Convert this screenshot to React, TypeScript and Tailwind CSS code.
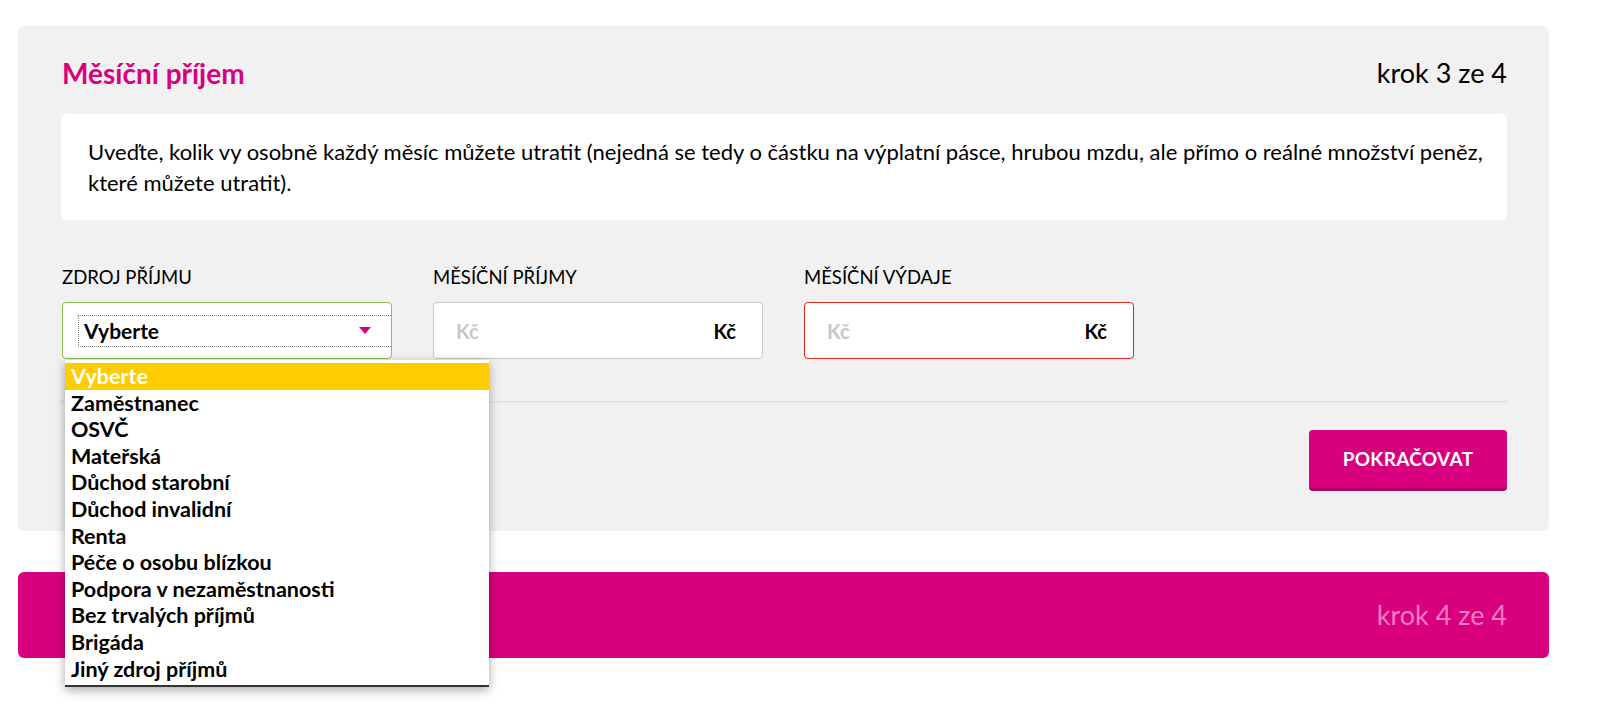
const options = [
  "Vyberte",
  "Zaměstnanec",
  "OSVČ",
  "Mateřská",
  "Důchod starobní",
  "Důchod invalidní",
  "Renta",
  "Péče o osobu blízkou",
  "Podpora v nezaměstnanosti",
  "Bez trvalých příjmů",
  "Brigáda",
  "Jiný zdroj příjmů",
];

function MoneyInput({ error }: { error?: boolean }) {
  return (
    <div
      className={
        "flex h-[57px] w-[330px] items-center justify-between rounded-[4px] border bg-white pl-[22px] pr-[26px] " +
        (error ? "border-[#e2231a]" : "border-[#c9c9c9]")
      }
    >
      <span className="text-[20px] font-bold text-[#c8c8c8]">Kč</span>
      <span className="text-[20px] font-bold text-black">Kč</span>
    </div>
  );
}

export default function App() {
  return (
    <div className="min-h-screen bg-white pt-[26px] pl-[18px] pr-[51px] font-['Lato',sans-serif] text-[#111]">
      <div className="rounded-[6px] bg-[#f1f1f1] pt-[30px] pb-[40px] pl-[43px] pr-[42px]">
        <div className="flex h-[34px] items-center justify-between pl-[1px]">
          <h1 className="text-[28px] font-bold text-[#d8007f]">Měsíční příjem</h1>
          <span className="text-[27px] text-black">krok 3 ze 4</span>
        </div>

        <div className="mt-[24px] rounded-[6px] bg-white pl-[27px] pr-[20px] py-[22px] text-[22px] leading-[31px] text-black">
          Uveďte, kolik vy osobně každý měsíc můžete utratit (nejedná se tedy o částku na výplatní pásce, hrubou mzdu, ale přímo o reálné množství peněz, které můžete utratit).
        </div>

        <div className="mt-[47px] flex gap-[41px] pl-[1px]">
          <div className="relative">
            <label className="block text-[18.5px] leading-[20px] text-black">ZDROJ PŘÍJMU</label>
            <div className="mt-[15px] flex h-[57px] w-[330px] items-center overflow-hidden rounded-[4px] border border-[#8cc152] bg-white pl-[15px]">
              <div className="flex h-[32px] flex-1 items-center border border-dotted border-r-0 border-[#888] pl-[5px] pr-[20px]">
                <span className="flex-1 text-[21px] font-bold text-black">Vyberte</span>
                <svg width="12" height="7" viewBox="0 0 12 7">
                  <path d="M0 0 H12 L6 7 Z" fill="#d8007f" />
                </svg>
              </div>
            </div>
            <ul className="absolute left-[3px] top-[93px] z-10 w-[424px] border-b-2 border-[#333] bg-white py-[3px] shadow-[0_3px_10px_rgba(0,0,0,0.35)]">
              {options.map((o, i) => (
                <li
                  key={o}
                  className={
                    "h-[26.6px] pl-[6px] text-[21.5px] font-bold leading-[26.6px] " +
                    (i === 0 ? "bg-[#ffcc00] text-white" : "text-black")
                  }
                >
                  {o}
                </li>
              ))}
            </ul>
          </div>
          <div>
            <label className="block text-[18.5px] leading-[20px] text-black">MĚSÍČNÍ PŘÍJMY</label>
            <div className="mt-[15px]">
              <MoneyInput />
            </div>
          </div>
          <div>
            <label className="block text-[18.5px] leading-[20px] text-black">MĚSÍČNÍ VÝDAJE</label>
            <div className="mt-[15px]">
              <MoneyInput error />
            </div>
          </div>
        </div>

        <div className="mt-[42px] h-[2px] bg-[#e4e4e4]" />

        <div className="mt-[27px] flex justify-end">
          <button className="h-[61px] w-[198px] rounded-[4px] border-b-[3px] border-[#a3005f] bg-[#d8007f] text-[19px] font-bold tracking-[0.3px] text-white">
            POKRAČOVAT
          </button>
        </div>
      </div>

      <div className="mt-[41px] flex h-[86px] items-center justify-end rounded-[6px] bg-[#d8007f] pr-[42px]">
        <span className="text-[27px] text-[#f07cc0]">krok 4 ze 4</span>
      </div>
    </div>
  );
}
